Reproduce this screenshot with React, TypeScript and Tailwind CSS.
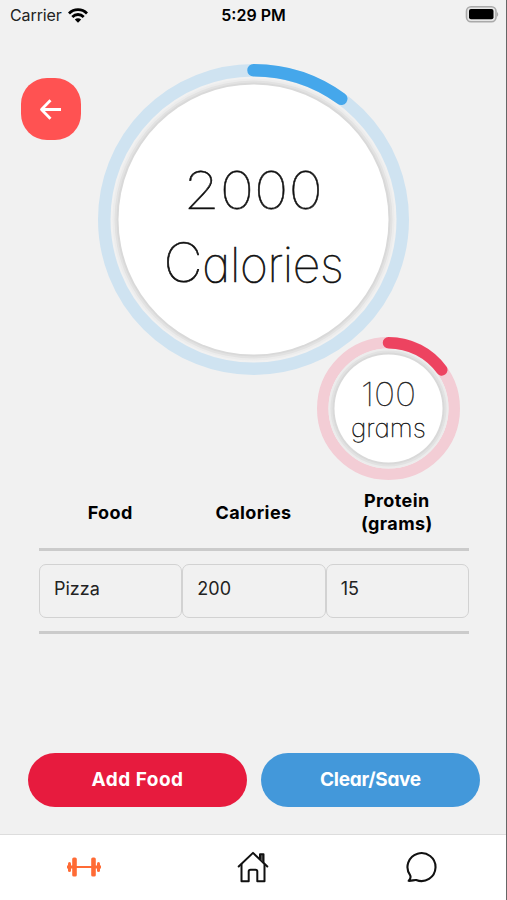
import type { ReactNode } from "react";

interface RingProps {
  size: number;
  stroke: number;
  inner: number;
  progress: number;
  color: string;
  track: string;
  children: ReactNode;
}

function Ring({ size, stroke, inner, progress, color, track, children }: RingProps) {
  const c = size / 2;
  const r = c - stroke / 2;
  const length = 2 * Math.PI * r;
  return (
    <div className="grid shrink-0" style={{ width: size, height: size }}>
      <svg
        className="col-start-1 row-start-1"
        width={size}
        height={size}
        viewBox={`0 0 ${size} ${size}`}
        fill="none"
      >
        <circle cx={c} cy={c} r={r} stroke={track} strokeWidth={stroke} />
        <circle cx={c} cy={c} r={inner + 6} fill="#ececec" />
        <circle cx={c} cy={c} r={inner + 4} fill="#e2e2e2" />
        <circle cx={c} cy={c} r={inner + 2} fill="#d9d9d9" />
        <circle cx={c} cy={c} r={inner} fill="#fff" />
        <circle
          cx={c}
          cy={c}
          r={r}
          stroke={color}
          strokeWidth={stroke}
          strokeLinecap="round"
          strokeDasharray={`${length * progress} ${length}`}
          transform={`rotate(-90 ${c} ${c})`}
        />
      </svg>
      <div className="z-10 col-start-1 row-start-1 flex flex-col items-center whitespace-nowrap font-thin text-[#111] [font-feature-settings:'cv11']">
        {children}
      </div>
    </div>
  );
}

function StatusBar() {
  return (
    <header className="grid h-[30px] grid-cols-3 items-center pl-[10px] pr-[7px] text-[16px] text-[#222]">
      <div className="flex items-center gap-[6px]">
        <span className="tracking-[-0.1px]">Carrier</span>
        <svg width="20" height="15" viewBox="0 0 20 15" fill="none" stroke="#000" strokeWidth="2.8">
          <path d="M1 5.4C6 .4 14 .4 19 5.4" />
          <path d="M4.3 8.9c3.2-3.2 8.2-3.2 11.4 0" />
          <path d="M6.8 11.4c1.8-1.7 4.6-1.7 6.4 0L10 14.7z" fill="#000" stroke="none" />
        </svg>
      </div>
      <span className="-ml-[2px] text-center font-semibold text-black">5:29 PM</span>
      <svg className="-mt-[2px] justify-self-end" width="34" height="18" viewBox="0 0 34 18">
        <rect x="1.5" y="1.7" width="29.5" height="15" rx="4.5" fill="#e6e6e6" stroke="#aaa" strokeWidth="1.6" />
        <rect x="4" y="4.1" width="24.5" height="10.2" rx="2" fill="#000" />
        <path d="M32 7c1.6.8 1.6 4 0 4.8z" fill="#aaa" />
      </svg>
    </header>
  );
}

function Dumbbell() {
  return (
    <svg className="-mt-[2px]" width="34" height="22" viewBox="0 0 34 22" fill="#ff6b35">
      <rect x="1" y="6" width="3" height="10" rx="1.5" />
      <rect x="5.2" y="1.5" width="4.6" height="19" rx="1.6" />
      <rect x="9" y="10" width="16" height="2" />
      <rect x="24.2" y="1.5" width="4.6" height="19" rx="1.6" />
      <rect x="30" y="6" width="3" height="10" rx="1.5" />
      <rect x="0" y="9.5" width="6" height="3" />
      <rect x="28" y="9.5" width="6" height="3" />
    </svg>
  );
}

function House() {
  return (
    <svg className="-mt-[2px]" width="32" height="32" viewBox="0 0 32 32" fill="none" stroke="#111" strokeWidth="2" strokeLinecap="round" strokeLinejoin="round">
      <path d="M1.7 15.5 16 1.9l14.3 13.6" />
      <path d="M4.5 13.5V30.2h7.2V20.5q0-1.8 1.8-1.8h5q1.8 0 1.8 1.8v9.7h7.2V13.5" />
      <path d="M23 8V3.3h3.5v8.2" fill="#555" />
    </svg>
  );
}

function Chat() {
  return (
    <svg className="-mt-[2px]" width="32" height="32" viewBox="0 0 32 32" fill="none" stroke="#111" strokeWidth="2.1" strokeLinejoin="round">
      <path d="M4.2 24.3A14 14 0 1 1 10.2 29C8.2 28.7 5.2 30.2 2.7 29.8 4.2 28.3 5 26.3 4.2 24.3Z" />
    </svg>
  );
}

const columns = ["Food", "Calories", "Protein (grams)"];
const row = ["Pizza", "200", "15"];

export default function App() {
  return (
    <div className="flex h-[900px] w-[507px] flex-col overflow-hidden border-r border-[#666] bg-[#f1f1f1] font-[Inter,sans-serif]">
      <StatusBar />

      <main className="flex flex-1 flex-col">
        <div className="flex h-[345px] items-start pl-[21px] pt-[34px]">
          <button className="mt-[14px] flex h-[62px] w-[60px] shrink-0 items-center justify-center rounded-[26px] bg-[#ff5252]">
            <svg width="24" height="22" viewBox="0 0 24 22" fill="none" stroke="#fff" strokeWidth="2.8" strokeLinejoin="round">
              <path d="M22 11.5H2.5M11.5 2.3 2.5 11.5l9 9.2" />
            </svg>
          </button>
          <div className="ml-[17px]">
            <Ring size={311} stroke={12.5} inner={135} progress={0.1} color="#45a7eb" track="#cfe3f1">
              <span className="mt-[89px] scale-x-[1.12] text-[52px] leading-[75px] [-webkit-text-stroke:0.5px_#111]">2000</span>
              <span className="-mt-[3px] text-[48px] leading-[75px] tracking-[-0.3px] [-webkit-text-stroke:0.7px_#111] first-letter:text-[54px]">Calories</span>
            </Ring>
          </div>
        </div>

        <div className="z-10 -mt-[38px] ml-[317px]">
          <Ring size={143} stroke={11.5} inner={54} progress={0.15} color="#ed4360" track="#f3cdd5">
            <span className="mt-[40px] scale-x-[1.08] text-[33px] leading-[34px] [-webkit-text-stroke:0.3px_#222]">100</span>
            <span className="scale-x-[1.06] text-[25px] leading-[34px] [-webkit-text-stroke:0.4px_#222]">grams</span>
          </Ring>
        </div>

        <section className="ml-[39px] w-[430px]">
          <div className="grid h-[68px] grid-cols-3 items-center pb-[4px] text-center text-[18px] font-bold leading-[23px] text-black">
            {columns.map((name) => (
              <span key={name} className="pl-[22px] pr-[23px] tracking-[0.4px]">{name}</span>
            ))}
          </div>
          <div className="h-[3px] bg-[#cbcbcb]" />
          <div className="grid grid-cols-3 py-[13px]">
            {row.map((value) => (
              <div key={value} className="h-[54px] rounded-[7px] border-[1.5px] border-[#d2d2d2] px-[14px] pt-[12px] text-[18px] leading-[24px] text-[#222]">
                {value}
              </div>
            ))}
          </div>
          <div className="h-[3px] bg-[#cbcbcb]" />
        </section>

        <div className="mb-[27px] mt-auto flex gap-[14px] pl-[28px] text-[19px] font-bold text-white [font-feature-settings:'cv11']">
          <button className="h-[54px] w-[219px] rounded-full bg-[#e71b3e] tracking-[0.5px]">Add Food</button>
          <button className="h-[54px] w-[219px] rounded-full bg-[#4398da] tracking-[-0.3px]">Clear/Save</button>
        </div>
      </main>

      <nav className="grid h-[66px] grid-cols-3 items-center justify-items-center border-t border-[#ddd] bg-white">
        <Dumbbell />
        <House />
        <Chat />
      </nav>
    </div>
  );
}
